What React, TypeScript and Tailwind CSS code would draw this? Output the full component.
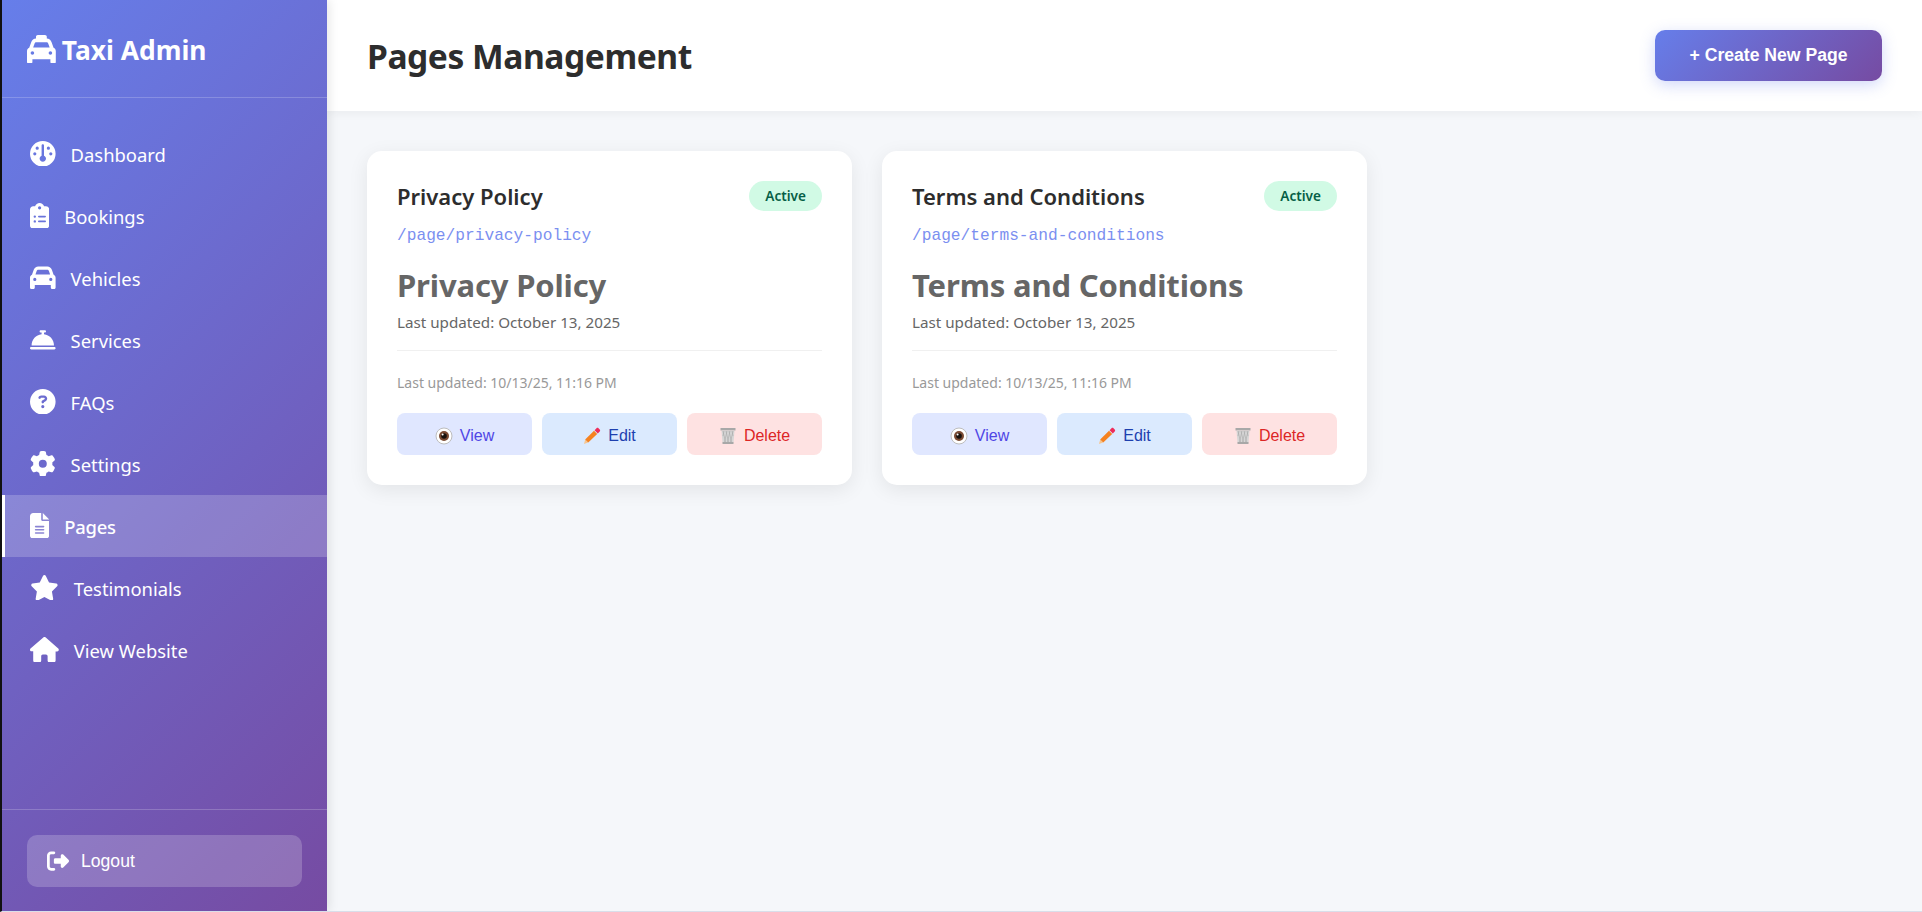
import { FaTaxi, FaGauge, FaClipboardList, FaCar, FaBellConcierge, FaCircleQuestion, FaGear, FaFileLines, FaStar, FaHouse, FaRightFromBracket } from "react-icons/fa6";

const menu = [
    { label: "Dashboard", icon: FaGauge, size: "w-[25.6px]" },
    { label: "Bookings", icon: FaClipboardList, size: "w-[19.2px]" },
    { label: "Vehicles", icon: FaCar, size: "w-[25.6px]" },
    { label: "Services", icon: FaBellConcierge, size: "w-[25.6px]" },
    { label: "FAQs", icon: FaCircleQuestion, size: "w-[25.6px]" },
    { label: "Settings", icon: FaGear, size: "w-[25.6px]" },
    { label: "Pages", icon: FaFileLines, size: "w-[19.2px]", active: true },
    { label: "Testimonials", icon: FaStar, size: "w-[28.8px]" },
    { label: "View Website", icon: FaHouse, size: "w-[28.8px]" },
]

const pages = [
    { name: "Privacy Policy", slug: "/page/privacy-policy" },
    { name: "Terms and Conditions", slug: "/page/terms-and-conditions" },
]

function EyeIcon() {
    return (
        <svg width="18" height="18" viewBox="0 0 18 18">
            <circle cx="9" cy="9" r="8" fill="#fff" stroke="#bdbdbd" />
            <circle cx="9" cy="9" r="5" fill="#7a4a33" />
            <circle cx="9" cy="9" r="2.8" fill="#17100d" />
            <circle cx="7.6" cy="7.4" r="1" fill="#fff" />
        </svg>
    )
}

function PencilIcon() {
    return (
        <svg width="18" height="18" viewBox="0 0 18 18">
            <path d="M1 17l1.2-4.4 2.9 3z" fill="#f7c58f" />
            <path d="M2.2 12.6l8.8-8.8 3.2 3.2-9 8.6z" fill="#f58220" />
            <path d="M11.6 3.2l1.9-1.9c.6-.6 1.4-.6 2 0l1.2 1.2c.6.6.6 1.4 0 2l-1.9 1.9z" fill="#ee2c5a" />
        </svg>
    )
}

function TrashIcon() {
    return (
        <svg width="18" height="18" viewBox="0 0 18 18">
            <path d="M1.5 1h15v2.5h-15z" fill="#a8a8a8" />
            <path d="M2.5 3.5h13l-1 12h-11z" fill="#d6d6d6" />
            <path d="M4 4l2.5 11M7 4l2.5 11M10 4l2.5 11M13 4l1 5M14 4l-2.5 11M11 4l-2.5 11M8 4l-2.5 11M5 4l-1 5" stroke="#a8a8a8" strokeWidth="0.6" />
            <path d="M3.5 15h11v2h-11z" fill="#a8a8a8" />
        </svg>
    )
}

function PageCard({ name, slug }: { name: string; slug: string }) {
    return (
        <div className="bg-white rounded-[15px] p-[30px] shadow-[0_5px_20px_rgba(0,0,0,0.08)]">
            <div className="flex justify-between items-start">
                <h3 className="text-[22px] font-semibold text-[#2d2d2d] leading-[30px]">{name}</h3>
                <span className="bg-[#d1fae5] text-[#065f46] text-[13.6px] font-semibold rounded-[20px] px-[16px] h-[30px] leading-[30px]">Active</span>
            </div>
            <div className="mt-[15px] text-[16.2px] leading-[20px] text-[#7b8ff0] font-['Liberation_Mono',monospace]">{slug}</div>
            <h1 className="mt-[17px] text-[31px] tracking-[-0.15px] font-bold leading-[44px] text-[#666]">{name}</h1>
            <p className="mt-[4px] text-[15.2px] leading-[22px] text-[#666]">Last updated: October 13, 2025</p>
            <div className="mt-[17px] border-t border-[#f0f0f0]" />
            <p className="mt-[22px] text-[14px] leading-[20px] text-[#999]">Last updated: 10/13/25, 11:16 PM</p>
            <div className="mt-[20px] flex gap-[10px]">
                <button className="flex-1 h-[42px] pt-[3px] rounded-lg bg-[#e0e7ff] text-[#4f46e5] text-[16px] flex items-center justify-center gap-[7px] font-['Liberation_Sans',sans-serif]"><EyeIcon /> View</button>
                <button className="flex-1 h-[42px] pt-[3px] rounded-lg bg-[#dbeafe] text-[#1e40af] text-[16px] flex items-center justify-center gap-[7px] font-['Liberation_Sans',sans-serif]"><PencilIcon /> Edit</button>
                <button className="flex-1 h-[42px] pt-[3px] rounded-lg bg-[#fee2e2] text-[#dc2626] text-[16px] flex items-center justify-center gap-[7px] font-['Liberation_Sans',sans-serif]"><TrashIcon /> Delete</button>
            </div>
        </div>
    )
}

export default function App() {
    return (
        <div className="flex h-[912px] overflow-hidden bg-[#f5f7fa] font-['Noto_Sans',sans-serif] border-l-2 border-l-[#111] border-b border-b-[#d9deea]">
            <aside className="w-[325px] shrink-0 flex flex-col text-white bg-[linear-gradient(135deg,#667eea_0%,#764ba2_100%)] shadow-[2px_0_10px_rgba(0,0,0,0.1)] z-10">
                <div className="h-[98px] pl-[25px] pt-[4px] flex items-center border-b border-white/20 shrink-0">
                    <FaTaxi className="w-[28.8px] h-[28.8px] mb-[3px]" />
                    <span className="ml-[6px] text-[26.4px] font-bold">Taxi Admin</span>
                </div>
                <nav className="pt-[25px] flex-1">
                    {menu.map((m) => (
                        <a key={m.label} className={`flex items-center h-[62px] text-[18.4px] ${m.active ? "bg-white/20 border-l-[3px] border-white pl-[25px] font-medium tracking-[-0.2px]" : "pl-[28px]"}`}>
                            <m.icon className={`h-[25.6px] mb-[1px] ${m.size}`} />
                            <span className="ml-[15px] mt-[2px]">{m.label}</span>
                        </a>
                    ))}
                </nav>
                <div className="h-[102px] border-t border-white/20 px-[25px] pt-[25px] shrink-0">
                    <button className="w-full h-[52px] rounded-[10px] bg-white/20 flex items-center pl-[20px] text-[17.6px] font-['Liberation_Sans',sans-serif]">
                        <FaRightFromBracket className="w-[22px] h-[22px] mr-[12px]" />
                        Logout
                    </button>
                </div>
            </aside>
            <main className="flex-1 min-w-0">
                <header className="h-[111px] bg-white flex items-center justify-between px-[40px] shadow-[0_2px_10px_rgba(0,0,0,0.05)]">
                    <h1 className="pt-[2px] text-[33.6px] tracking-[-0.45px] font-bold text-[#2d2d2d]">Pages Management</h1>
                    <button className="w-[227px] h-[51px] rounded-[10px] text-white text-[17.6px] font-bold font-['Liberation_Sans',sans-serif] bg-[linear-gradient(135deg,#667eea_0%,#764ba2_100%)] shadow-[0_4px_15px_rgba(102,126,234,0.3)]">+ Create New Page</button>
                </header>
                <div className="px-[40px] pt-[40px] grid grid-cols-[485px_485px] gap-[30px]">
                    {pages.map((p) => (
                        <PageCard key={p.slug} name={p.name} slug={p.slug} />
                    ))}
                </div>
            </main>
        </div>
    )
}
